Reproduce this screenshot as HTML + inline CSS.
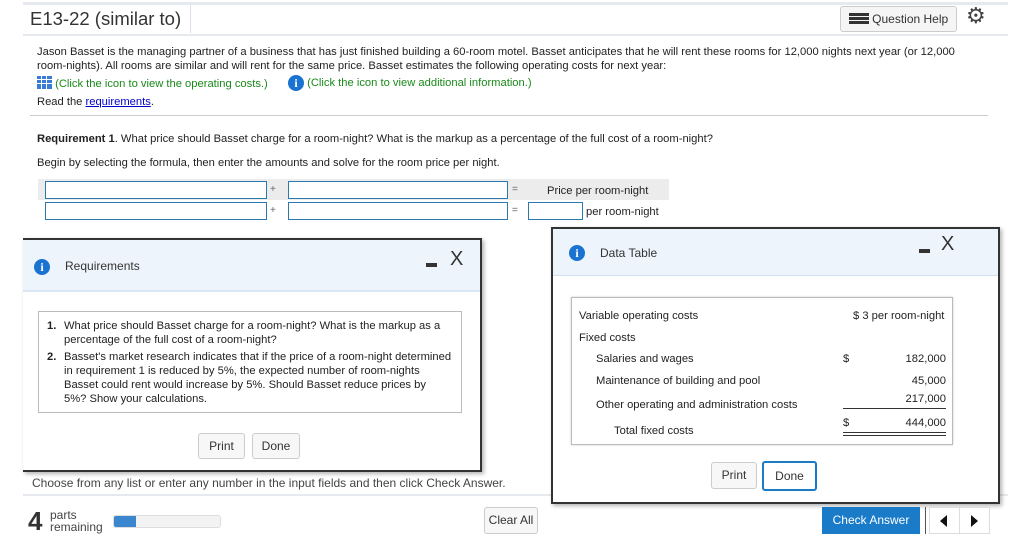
<!DOCTYPE html>
<html><head><meta charset="utf-8"><style>
*{box-sizing:border-box;margin:0;padding:0}
body{width:1024px;height:541px;background:#fff;font-family:"Liberation Sans",sans-serif;color:#222;position:relative;overflow:hidden;font-size:11.2px}
.a{position:absolute;white-space:nowrap}
.inp{position:absolute;border:1px solid #2a7ab0;background:#fff;height:18px}
.btn{position:absolute;border:1px solid #ccc;border-radius:3px;background:#f7f7f7;font-size:12px;text-align:center;color:#333}
.ic{display:inline-block;width:16px;height:16px;border-radius:50%;background:#1a73d0;color:#fff;font:bold 12px/16px "Liberation Serif",serif;text-align:center;vertical-align:middle}
</style></head><body>
<div class="a" style="left:23px;top:2px;width:985px;height:3px;background:#e6e9ee"></div>
<div class="a" style="left:30px;top:8px;font-size:18.5px;color:#333">E13-22 (similar to)</div>
<div class="a" style="left:190px;top:5px;width:1px;height:28px;background:#dde"></div>
<div class="a" style="left:23px;top:34px;width:985px;height:2px;background:#e6e9ee"></div>
<div class="btn" style="left:840px;top:6px;width:117px;height:26px;line-height:24px;background:#f5f5f5">
<span style="display:inline-block;width:20px;height:12px;vertical-align:-2px;background:repeating-linear-gradient(#333 0 3px,#f5f5f5 3px 4px)"></span> Question Help</div>
<div class="a" style="left:966px;top:4px;font-size:22px;color:#444;font-family:'DejaVu Sans'">⚙</div>
<div class="a" style="left:37px;top:45px;line-height:14px">Jason Basset is the managing partner of a business that has just finished building a 60-room motel. Basset anticipates that he will rent these rooms for 12,000 nights next year (or 12,000<br>room-nights). All rooms are similar and will rent for the same price. Basset estimates the following operating costs for next year:</div>
<div class="a" style="left:37px;top:76px;color:#1a8a1a"><span style="display:inline-block;width:15px;height:13px;background:#3a7bd5;vertical-align:-2px;background-image:linear-gradient(90deg,transparent 4px,#fff 4px 5px,transparent 5px 9px,#fff 9px 10px,transparent 10px),linear-gradient(transparent 3px,#fff 3px 4px,transparent 4px 7px,#fff 7px 8px,transparent 8px)"></span> (Click the icon to view the operating costs.)</div>
<div class="a" style="left:288px;top:75px;color:#1a8a1a"><span class="ic">i</span> (Click the icon to view additional information.)</div>
<div class="a" style="left:37px;top:96px">Read the <span style="color:#00c;text-decoration:underline">requirements</span>.</div>
<div class="a" style="left:30px;top:115px;width:958px;height:1px;background:#ccc"></div>
<div class="a" style="left:37px;top:133px"><b>Requirement 1</b>. What price should Basset charge for a room-night? What is the markup as a percentage of the full cost of a room-night?</div>
<div class="a" style="left:37px;top:157px">Begin by selecting the formula, then enter the amounts and solve for the room price per night.</div>
<div class="a" style="left:38px;top:179px;width:631px;height:21px;background:#ececec"></div>
<div class="inp" style="left:45px;top:181px;width:222px"></div>
<div class="a" style="left:270px;top:184px;font-size:10px;color:#666">+</div>
<div class="inp" style="left:288px;top:181px;width:220px"></div>
<div class="a" style="left:512px;top:184px;font-size:10px;color:#666">=</div>
<div class="a" style="left:547px;top:185px">Price per room-night</div>
<div class="inp" style="left:45px;top:202px;width:222px"></div>
<div class="a" style="left:270px;top:205px;font-size:10px;color:#666">+</div>
<div class="inp" style="left:288px;top:202px;width:220px"></div>
<div class="a" style="left:512px;top:205px;font-size:10px;color:#666">=</div>
<div class="inp" style="left:528px;top:202px;width:55px"></div>
<div class="a" style="left:586px;top:206px">per room-night</div>

<!-- requirements modal -->
<div class="a" style="left:23px;top:238px;width:459px;height:234px;border:2px solid #333;border-left:none;background:#fff;box-shadow:2px 2px 4px rgba(0,0,0,.3)">
<div class="a" style="left:0;top:0;width:457px;height:52px;background:#eef4fc;border-bottom:2px solid #dbe7f6"></div>
<div class="a" style="left:11px;top:19px"><span class="ic">i</span></div>
<div class="a" style="left:42px;top:19px;font-size:12px;color:#333">Requirements</div>
<div class="a" style="left:403px;top:23px;width:11px;height:4px;background:#333"></div>
<div class="a" style="left:427px;top:8px;font-size:20px;color:#333">X</div>
<div class="a" style="left:15px;top:71px;width:424px;height:102px;border:1px solid #bbb;padding:7px 0 0 8px;line-height:14px">
<div style="display:flex"><b style="width:17px">1.</b><span>What price should Basset charge for a room-night? What is the markup as a<br>percentage of the full cost of a room-night?</span></div>
<div style="display:flex;margin-top:3px"><b style="width:17px">2.</b><span>Basset's market research indicates that if the price of a room-night determined<br>in requirement 1 is reduced by 5%, the expected number of room-nights<br>Basset could rent would increase by 5%. Should Basset reduce prices by<br>5%? Show your calculations.</span></div>
</div>
<div class="btn" style="left:175px;top:193px;width:47px;height:26px;line-height:24px">Print</div>
<div class="btn" style="left:229px;top:193px;width:48px;height:26px;line-height:24px">Done</div>
</div>

<div class="a" style="left:32px;top:476px;font-size:12px;color:#444">Choose from any list or enter any number in the input fields and then click Check Answer.</div>
<div class="a" style="left:23px;top:494px;width:985px;height:2px;background:#e6e9ee"></div>
<div class="a" style="left:974px;top:474px;width:20px;height:20px;border-radius:50%;background:#f5c518;border:1px solid #b08a10;font:bold 13px/18px 'Liberation Sans';text-align:center;color:#333">?</div>

<!-- data table modal -->
<div class="a" style="left:551px;top:227px;width:449px;height:277px;border:2px solid #333;background:#fff;box-shadow:2px 2px 4px rgba(0,0,0,.3)">
<div class="a" style="left:0;top:0;width:445px;height:47px;background:#eef4fc;border-bottom:1px solid #cfe0f3"></div>
<div class="a" style="left:16px;top:16px"><span class="ic">i</span></div>
<div class="a" style="left:47px;top:17px;font-size:12px;color:#333">Data Table</div>
<div class="a" style="left:366px;top:20px;width:11px;height:4px;background:#333"></div>
<div class="a" style="left:388px;top:4px;font-size:20px;color:#333">X</div>
<div class="a" style="left:18px;top:68px;width:382px;height:148px;border:1px solid #bbb;box-shadow:0 0 2px #ccc"></div>
<div class="a" style="left:26px;top:81px">Variable operating costs</div>
<div class="a" style="left:300px;top:81px">$ 3 per room-night</div>
<div class="a" style="left:26px;top:103px">Fixed costs</div>
<div class="a" style="left:43px;top:124px">Salaries and wages</div>
<div class="a" style="left:290px;top:124px">$</div>
<div class="a" style="left:345px;top:124px;width:48px;text-align:right">182,000</div>
<div class="a" style="left:43px;top:146px">Maintenance of building and pool</div>
<div class="a" style="left:345px;top:146px;width:48px;text-align:right">45,000</div>
<div class="a" style="left:43px;top:170px">Other operating and administration costs</div>
<div class="a" style="left:345px;top:164px;width:48px;text-align:right">217,000</div>
<div class="a" style="left:290px;top:179px;width:103px;height:1px;background:#333"></div>
<div class="a" style="left:61px;top:196px">Total fixed costs</div>
<div class="a" style="left:290px;top:188px">$</div>
<div class="a" style="left:345px;top:188px;width:48px;text-align:right">444,000</div>
<div class="a" style="left:290px;top:203px;width:103px;height:4px;border-top:1px solid #333;border-bottom:1px solid #333"></div>
<div class="btn" style="left:158px;top:233px;width:46px;height:27px;line-height:25px">Print</div>
<div class="btn" style="left:209px;top:232px;width:55px;height:30px;line-height:27px;border:2px solid #1a7bc9;background:#fff">Done</div>
</div>

<div class="a" style="left:28px;top:508px;font-size:26px;font-weight:bold;color:#333;line-height:26px">4</div>
<div class="a" style="left:50px;top:509px;font-size:12px;line-height:12px;color:#444">parts<br>remaining</div>
<div class="a" style="left:113px;top:515px;width:108px;height:13px;border:1px solid #ddd;border-radius:3px;background:#f3f3f3;overflow:hidden"><div style="width:22px;height:100%;background:#3a87d0"></div></div>
<div class="btn" style="left:484px;top:507px;width:54px;height:27px;line-height:25px">Clear All</div>
<div class="a" style="left:822px;top:507px;width:98px;height:27px;background:#1a7bc9;color:#fff;font-size:12px;line-height:27px;text-align:center">Check Answer</div>
<div class="a" style="left:925px;top:507px;width:1px;height:27px;background:#555"></div>
<div class="a" style="left:929px;top:507px;width:61px;height:27px;border:1px solid #ddd;background:#fff"></div>
<div class="a" style="left:959px;top:508px;width:1px;height:25px;background:#ddd"></div>
<div class="a" style="left:940px;top:515px;width:0;height:0;border-top:6px solid transparent;border-bottom:6px solid transparent;border-right:7px solid #111"></div>
<div class="a" style="left:971px;top:515px;width:0;height:0;border-top:6px solid transparent;border-bottom:6px solid transparent;border-left:7px solid #111"></div>
</body></html>
